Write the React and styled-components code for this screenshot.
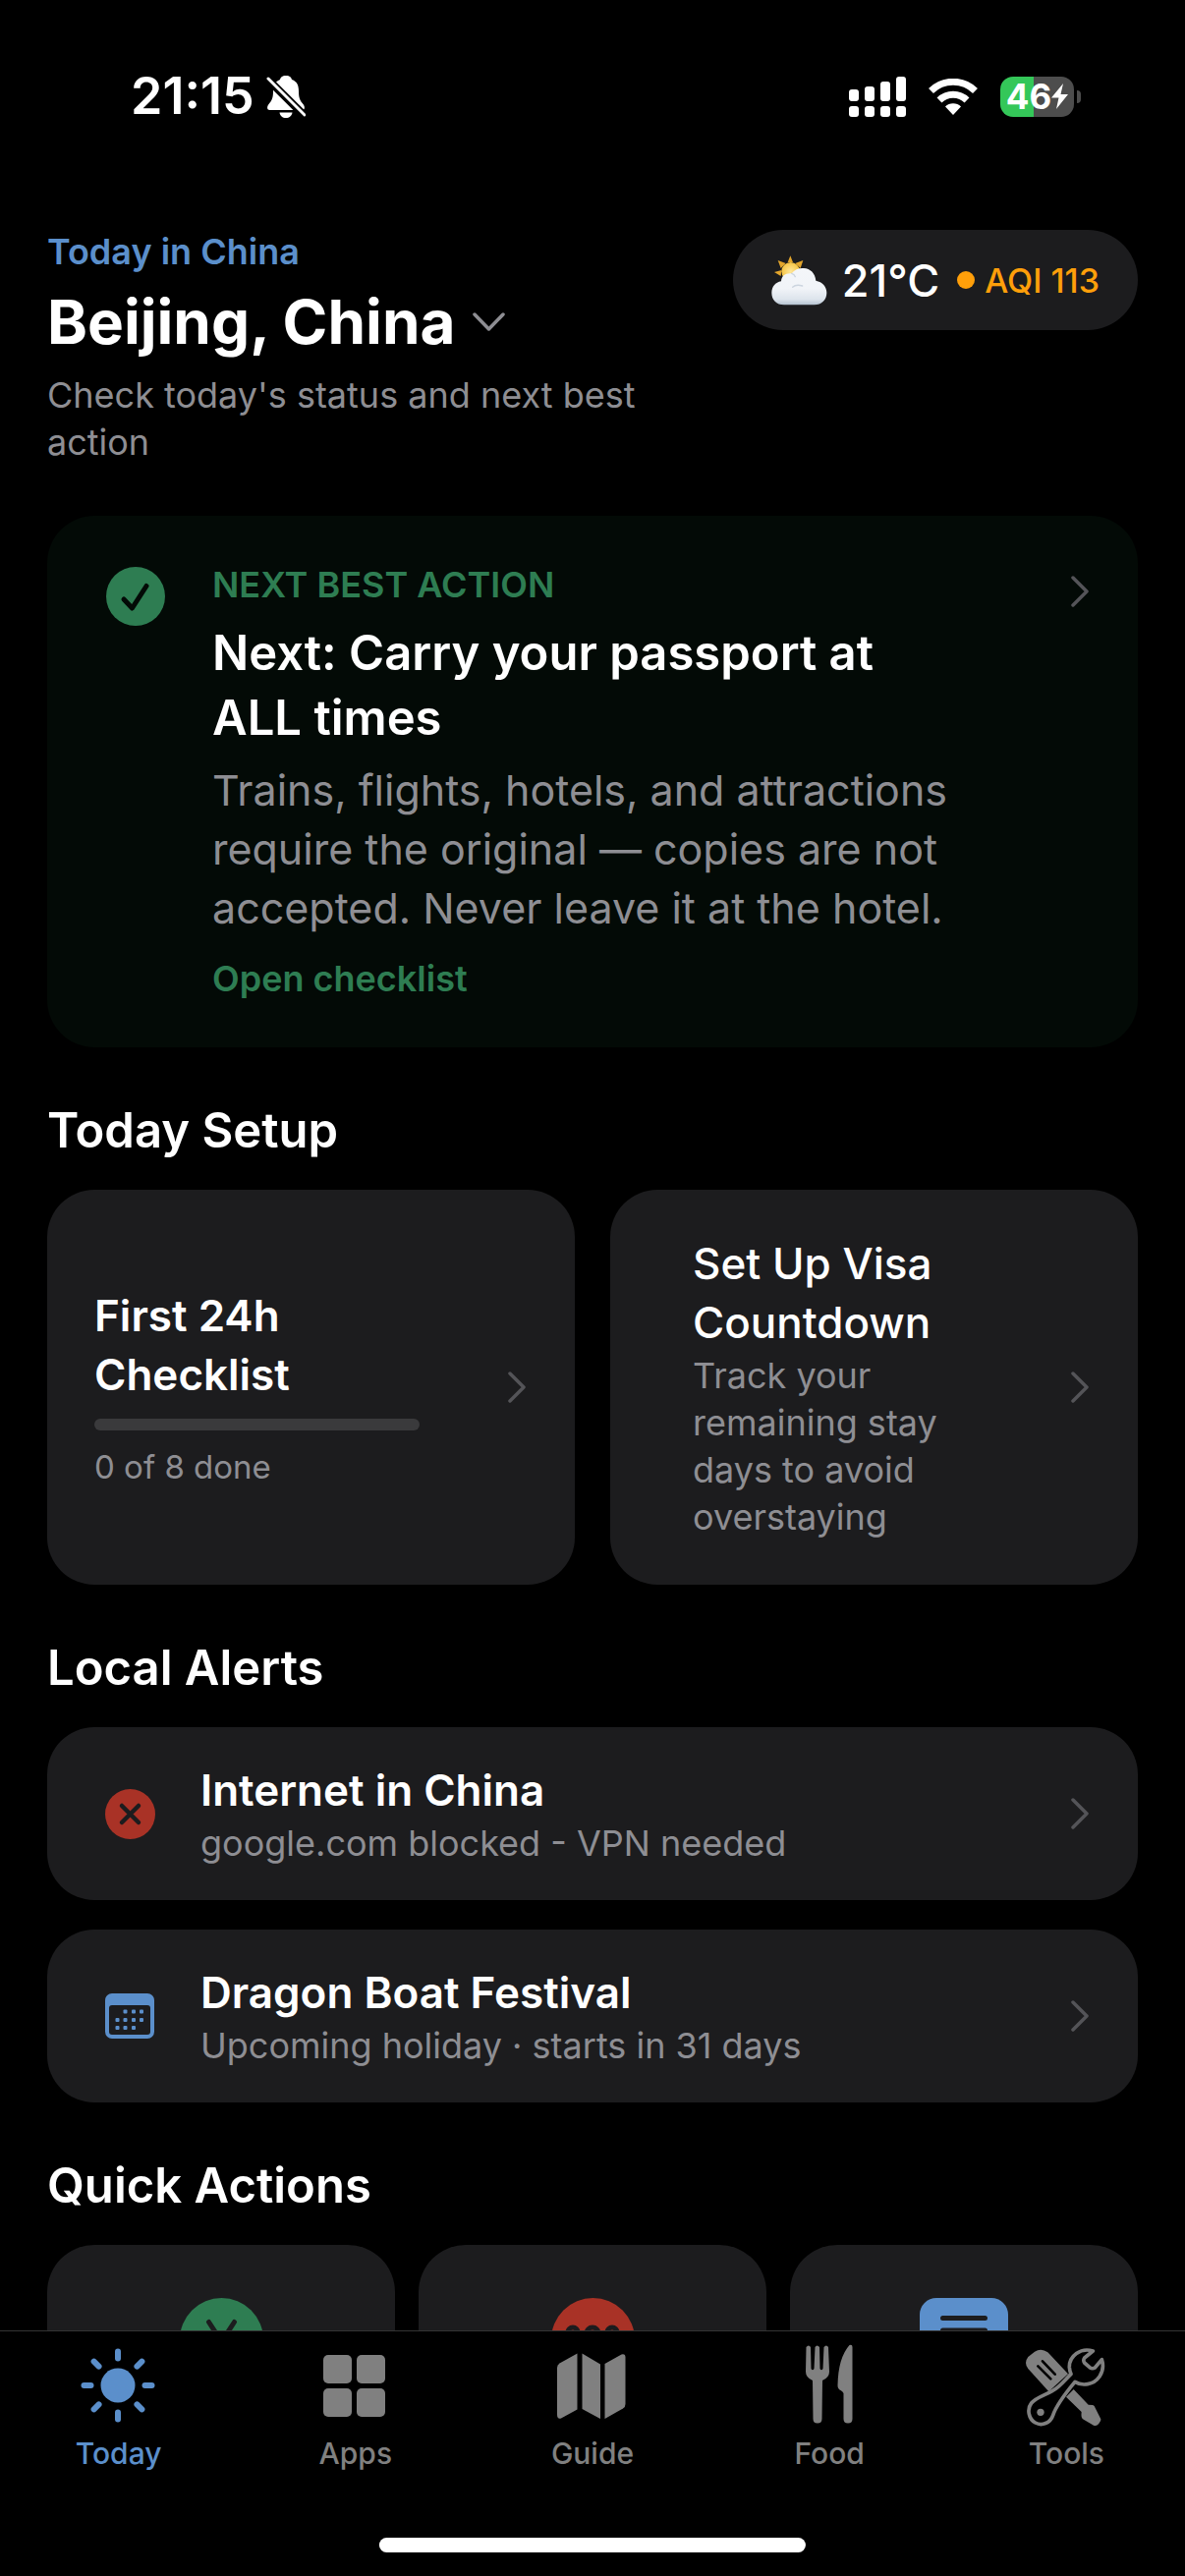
import styled, { createGlobalStyle } from "styled-components";

const GlobalStyle = createGlobalStyle`
  * {
    box-sizing: border-box;
    margin: 0;
    padding: 0;
  }
  body {
    background: #000;
    color: #fff;
    font-family: Inter, "Liberation Sans", sans-serif;
  }
  button {
    border: none;
    background: none;
    color: inherit;
    font: inherit;
    text-align: left;
    cursor: pointer;
  }
  a {
    color: inherit;
    text-decoration: none;
  }
  svg {
    display: block;
    flex-shrink: 0;
  }
`;

const Screen = styled.div`
  height: 100vh;
  display: flex;
  flex-direction: column;
  overflow: hidden;
`;

const StatusBar = styled.div`
  display: flex;
  align-items: center;
  justify-content: space-between;
  flex-shrink: 0;
  height: 196px;
  padding: 0 113px 0 133px;
`;

const StatusGroup = styled.div`
  display: flex;
  align-items: center;
  gap: ${(props) => props.$gap}px;
`;

const Clock = styled.span`
  font-size: 52px;
  line-height: 60px;
  font-weight: 600;
`;

const Battery = styled.div`
  position: relative;
  display: flex;
  align-items: center;
  justify-content: center;
  width: 75px;
  height: 41px;
  border-radius: 13px;
  background: linear-gradient(90deg, #34c759 46%, #4d4d4d 46%);
  font-size: 35px;
  font-weight: 700;
  line-height: 41px;

  &::after {
    content: "";
    position: absolute;
    right: -7px;
    top: 14px;
    width: 4px;
    height: 13px;
    border-radius: 0 4px 4px 0;
    background: #4d4d4d;
  }
`;

const Content = styled.main`
  flex: 1;
  min-height: 0;
  overflow: hidden;
  padding: 38px 48px 0;
`;

const Header = styled.header`
  display: flex;
  align-items: flex-start;
  justify-content: space-between;
  gap: 36px;
  margin-bottom: 51px;
`;

const HeaderText = styled.div`
  flex: 1;
`;

const Eyebrow = styled.p`
  font-size: 36px;
  line-height: 44px;
  font-weight: 600;
  color: ${(props) => props.$color};
`;

const CityButton = styled.button`
  display: flex;
  align-items: center;
  gap: 18px;
`;

const City = styled.h1`
  font-size: 62px;
  line-height: 100px;
  font-weight: 700;
`;

const Caption = styled.p`
  font-size: 36px;
  line-height: 48px;
  color: #8e8e93;
`;

const WeatherPill = styled.button`
  display: flex;
  align-items: center;
  height: 102px;
  padding: 0 39px;
  border-radius: 51px;
  background: #1c1c1e;
`;

const Temperature = styled.span`
  margin: 0 18px 0 15px;
  font-size: 45px;
  font-weight: 500;
`;

const Aqi = styled.span`
  display: flex;
  align-items: center;
  gap: 10px;
  font-size: 34px;
  font-weight: 500;
  color: #ff9f0a;

  &::before {
    content: "";
    width: 18px;
    height: 18px;
    border-radius: 50%;
    background: #ff9f0a;
  }
`;

const Card = styled.button`
  display: flex;
  align-items: center;
  width: 100%;
  padding: 45px 48px;
  border-radius: 48px;
  background: #1c1c1e;
`;

const ActionCard = styled(Card)`
  align-items: flex-start;
  padding: 48px 48px 48px 60px;
  background: #030a06;

  > svg {
    margin-top: 4px;
  }

  > svg:last-child {
    margin-top: 12px;
  }
`;

const ActionText = styled.div`
  flex: 1;
  padding: 0 110px 0 48px;
`;

const ActionTitle = styled.h2`
  margin: 15px 0 10px;
  font-size: 49px;
  line-height: 66px;
  font-weight: 600;
`;

const ActionBody = styled.p`
  margin-bottom: 20px;
  font-size: 43px;
  line-height: 60px;
  color: #8e8e93;
`;

const SectionTitle = styled.h2`
  margin: 54px 0 29px;
  font-size: 49px;
  line-height: 62px;
  font-weight: 600;
`;

const CardGrid = styled.div`
  display: grid;
  grid-template-columns: repeat(${(props) => props.$columns}, 1fr);
  gap: ${(props) => props.$gap}px;
`;

const CardText = styled.div`
  flex: 1;
  padding: 0 ${(props) => props.$right || 0}px 0 ${(props) => props.$left || 0}px;
`;

const CardTitle = styled.h3`
  font-size: 44px;
  line-height: 60px;
  font-weight: ${(props) => props.$weight || 600};
`;

const Progress = styled.div`
  height: 12px;
  margin: 15px 0;
  border-radius: 6px;
  background: #3a3a3c;
  overflow: hidden;
`;

const ProgressFill = styled.div`
  height: 100%;
  background: #2e7d52;
`;

const Done = styled.p`
  font-size: 33px;
  line-height: 45px;
  color: #8e8e93;
`;

const AlertList = styled.div`
  display: flex;
  flex-direction: column;
  gap: 30px;
`;

const AlertCard = styled(Card)`
  padding: 34px 48px;
`;

const AlertIcon = styled.div`
  display: flex;
  justify-content: center;
  width: 72px;
  margin-right: 36px;
`;

const QuickCard = styled.button`
  display: flex;
  justify-content: center;
  height: 280px;
  padding-top: 54px;
  border-radius: 48px;
  background: #1c1c1e;
`;

const TabBar = styled.nav`
  position: relative;
  display: grid;
  grid-template-columns: repeat(5, 1fr);
  flex-shrink: 0;
  height: 250px;
  border-top: 1px solid #343434;
  background: #000;
`;

const Tab = styled.a`
  display: flex;
  flex-direction: column;
  align-items: center;
  gap: 6px;
  padding-top: 13px;
  font-size: 30px;
  line-height: 42px;
  font-weight: 500;

  && {
    color: ${(props) => (props.$active ? "#5b8fcb" : "#808080")};
  }
`;

const HomeIndicator = styled.div`
  position: absolute;
  left: 50%;
  bottom: 24px;
  width: 36%;
  height: 15px;
  border-radius: 8px;
  background: #fff;
  transform: translateX(-50%);
`;

const BellOff = () => (
  <svg width="40" height="44" viewBox="0 0 40 44">
    <path
      fill="#fff"
      d="M20 1c-4 0-5.500 2-6 4C8.500 7 7 12 7 17c0 6-1 9-4.500 13C.5 32.500.5 36 3.500 36h33c3 0 3-3.500 1-6C34 26 33 23 33 17S31.500 7 26 5c-.5-2-2-4-6-4zM13.500 38.500h13c-.5 3.500-3 5.500-6.500 5.500s-6-2-6.500-5.500z"
    />
    <path stroke="#000" strokeWidth="8" d="M0 3l40 40" />
    <path stroke="#fff" strokeWidth="3" strokeLinecap="round" d="M2 4l37 37" />
  </svg>
);

const Signal = () => (
  <svg width="58" height="41" viewBox="0 0 58 41" fill="#fff">
    <rect x="0" y="13" width="10" height="12" rx="3" />
    <rect x="16" y="10" width="10" height="15" rx="3" />
    <rect x="32" y="5" width="10" height="20" rx="3" />
    <rect x="48" y="0" width="10" height="25" rx="3" />
    {[0, 16, 32, 48].map((x) => (
      <rect key={x} x={x} y="30" width="10" height="11" rx="3" />
    ))}
  </svg>
);

const Wifi = () => (
  <svg width="50" height="37" viewBox="0 0 50 37" fill="none">
    <path stroke="#fff" strokeWidth="7" d="M2.500 12.500a32 32 0 0 1 45 0" />
    <path stroke="#fff" strokeWidth="7" d="M11 22a20 20 0 0 1 28 0" />
    <path fill="#fff" d="M25 37l-8-8.500a11.500 11.500 0 0 1 16 0z" />
  </svg>
);

const Bolt = () => (
  <svg width="17" height="26" viewBox="0 0 17 26" fill="#fff">
    <path d="M12 0L0 14.500h7.500L5 26l12-15H9.500z" />
  </svg>
);

const Chevron = ({ down }) =>
  down ? (
    <svg width="33" height="20" viewBox="0 0 33 20" fill="none">
      <path
        d="M2 2l14.500 15L31 2"
        stroke="#8e8e93"
        strokeWidth="3.500"
        strokeLinecap="round"
        strokeLinejoin="round"
      />
    </svg>
  ) : (
    <svg width="20" height="34" viewBox="0 0 20 34" fill="none">
      <path
        d="M2 3l14 14L2 31"
        stroke="#545458"
        strokeWidth="3.500"
        strokeLinecap="round"
        strokeLinejoin="round"
      />
    </svg>
  );

const Weather = () => (
  <svg width="57" height="51" viewBox="39 61 171 153">
    <defs>
      <linearGradient id="cloud" x1="0" y1="0" x2="0" y2="1">
        <stop offset="0" stopColor="#f4f6f9" />
        <stop offset=".55" stopColor="#f1f4f8" />
        <stop offset=".85" stopColor="#dde4ec" />
        <stop offset="1" stopColor="#b4c2d0" />
      </linearGradient>
      <radialGradient id="sun">
        <stop offset="0" stopColor="#ffe79a" />
        <stop offset="1" stopColor="#f6c443" />
      </radialGradient>
    </defs>
    <path
      fill="#e3a52c"
      d="M89 82l8-20 8 20zM112 85l24-9-8 24zM68 100l-9-24 24 9zM70 106l-22 6 20 12z"
    />
    <circle cx="98" cy="110" r="28" fill="url(#sun)" />
    <path
      fill="url(#cloud)"
      d="M78 212c-24 0-38-16-38-37 0-18 11-32 29-35 1-17 13-26 32-24 9-12 22-17 37-16 20 1 35 15 37 38 20 4 33 18 33 37 0 21-15 37-38 37z"
    />
    <path
      d="M101 116q8 2 11 10M104 158q10-10 30-4"
      fill="none"
      stroke="#ccd5df"
      strokeWidth="4"
      strokeLinecap="round"
    />
  </svg>
);

const CheckCircle = () => (
  <svg width="60" height="60" viewBox="0 0 60 60">
    <circle cx="30" cy="30" r="30" fill="#2e7d52" />
    <path
      d="M18 33l8.500 9L41 19.500"
      fill="none"
      stroke="#030a06"
      strokeWidth="5"
      strokeLinecap="round"
      strokeLinejoin="round"
    />
  </svg>
);

const CrossCircle = () => (
  <svg width="51" height="51" viewBox="0 0 51 51">
    <circle cx="25.500" cy="25.500" r="25.500" fill="#a93226" />
    <path
      d="M17 17l17 17M34 17L17 34"
      stroke="#1c1c1e"
      strokeWidth="4.500"
      strokeLinecap="round"
    />
  </svg>
);

const calendarDots = [
  [20.500, 18.500],
  [29, 18.500],
  [37, 18.500],
  [12.500, 27],
  [20.500, 27],
  [29, 27],
  [37, 27],
  [12.500, 35],
  [20.500, 35],
  [29, 35],
];

const Calendar = () => (
  <svg width="50" height="46" viewBox="0 0 50 46">
    <path
      fill="#5b8fcb"
      fillRule="evenodd"
      d="M7 0h36a7 7 0 0 1 7 7v32a7 7 0 0 1-7 7H7a7 7 0 0 1-7-7V7a7 7 0 0 1 7-7zM7 12a3 3 0 0 0-3 3v24a3 3 0 0 0 3 3h36a3 3 0 0 0 3-3V15a3 3 0 0 0-3-3z"
    />
    {calendarDots.map(([x, y]) => (
      <rect key={`${x}-${y}`} x={x - 2} y={y - 2} width="4" height="4" rx="1" fill="#5b8fcb" />
    ))}
  </svg>
);

const YuanCircle = () => (
  <svg width="85" height="85" viewBox="0 0 85 85">
    <circle cx="42.500" cy="42.500" r="42.500" fill="#2e7d52" />
    <path
      d="M29.500 24.500l13 20 13-20M42.500 44.500V64M31 46h23M31 55h23"
      fill="none"
      stroke="#1c1c1e"
      strokeWidth="5"
      strokeLinecap="round"
    />
  </svg>
);

const SosCircle = () => (
  <svg width="85" height="85" viewBox="0 0 85 85">
    <circle cx="42.500" cy="42.500" r="42.500" fill="#a93226" />
    <g fill="none" stroke="#1c1c1e" strokeWidth="5">
      <rect x="17" y="30" width="10" height="24" rx="5" />
      <rect x="36" y="30" width="12" height="24" rx="6" />
      <rect x="57" y="30" width="10" height="24" rx="5" />
    </g>
  </svg>
);

const Phrase = () => (
  <svg width="90" height="85" viewBox="0 0 90 85">
    <rect width="90" height="85" rx="17" fill="#5b8fcb" />
    <path
      d="M23.500 20.500h43M23.500 33h43"
      stroke="#1c1c1e"
      strokeWidth="5"
      strokeLinecap="round"
    />
  </svg>
);

const SunIcon = () => (
  <svg width="84" height="84" viewBox="0 0 84 84">
    <circle cx="41" cy="42" r="17.500" fill="currentColor" />
    {[0, 45, 90, 135, 180, 225, 270, 315].map((angle) => (
      <path
        key={angle}
        d="M41 7.500v7"
        stroke="currentColor"
        strokeWidth="6"
        strokeLinecap="round"
        transform={`rotate(${angle} 41 42)`}
      />
    ))}
  </svg>
);

const GridIcon = () => (
  <svg width="84" height="84" viewBox="0 0 84 84" fill="currentColor">
    <rect x="9" y="11" width="29" height="29" rx="5" />
    <rect x="43" y="11" width="29" height="29" rx="5" />
    <rect x="9" y="45" width="29" height="29" rx="5" />
    <rect x="43" y="45" width="29" height="29" rx="5" />
  </svg>
);

const MapIcon = () => (
  <svg width="84" height="84" viewBox="0 0 84 84" fill="currentColor">
    <path d="M26.500 9.500v57L10 75.500q-4 1-4-3.500V24q0-3 2.500-4.500z" />
    <path d="M31.500 9.500l18.500 11V76L31.500 66z" />
    <path d="M54.500 20l17-9.500q4-1 4 3V61q0 3-2.500 4.500L54.500 76z" />
  </svg>
);

const CutleryIcon = () => (
  <svg width="84" height="84" viewBox="0 0 84 84" fill="currentColor">
    <path d="M18.500 3q2.500-3 4.500 0l.5 22q1.500 2.500 3 0L27.500 3q2-3 4.500 0l.5 22q1.500 2.500 3 0L36.500 3q2.500-3 4.500 0l1 25q0 6-7 9l-.5 39q0 4.500-4.500 4.500t-4.500-4.500L25 37q-7-3-7-9z" />
    <path d="M62.500 1q3-1 3 2v73q0 4.500-4.500 4.500T56.500 76V50q-1-2-3-3-3-1.500-3-5 .5-28 12-41z" />
  </svg>
);

const ToolsIcon = () => (
  <svg width="84" height="84" viewBox="40 33 252 252">
    <path
      fill="currentColor"
      d="M50 72l20-16q20-13 40 2l62 66-59 54-63-70q-14-18 0-36z"
    />
    <path
      d="M80 100l39 39M94 85l38 40"
      stroke="#000"
      strokeWidth="8"
      strokeLinecap="round"
    />
    <path
      fill="currentColor"
      d="M189 171l45 47 13 1q4 1 5 3l20 40q1 6-10 18-6 4-12 1l-33-19q-6-4-4-22l-47-46z"
    />
    <path
      d="M248 54C210 42 175 70 176 104q1 12 5 20c-21 21-36 41-56 51-25 15-50 20-65 38-15 19-8 49 12 60 20 11 46 1 54-23 8-25 24-50 67-102 22 14 57 10 75-16q16-24 7-52l-21 25q-8 5-16-1l-16-14q-5-8 0-15z"
      fill="#000"
      stroke="currentColor"
      strokeWidth="11"
      strokeLinejoin="round"
    />
    <circle cx="88" cy="241" r="11" fill="currentColor" />
  </svg>
);

const alerts = [
  {
    title: "Internet in China",
    detail: "google.com blocked - VPN needed",
    icon: <CrossCircle />,
  },
  {
    title: "Dragon Boat Festival",
    detail: "Upcoming holiday · starts in 31 days",
    icon: <Calendar />,
  },
];

const quickActions = [
  { label: "Payments", icon: <YuanCircle /> },
  { label: "Emergency", icon: <SosCircle /> },
  { label: "Phrases", icon: <Phrase /> },
];

const tabs = [
  { label: "Today", icon: <SunIcon /> },
  { label: "Apps", icon: <GridIcon /> },
  { label: "Guide", icon: <MapIcon /> },
  { label: "Food", icon: <CutleryIcon /> },
  { label: "Tools", icon: <ToolsIcon /> },
];

const App = () => {
  const done = 0;
  const total = 8;

  return (
    <Screen>
      <GlobalStyle />
      <StatusBar>
        <StatusGroup $gap={12}>
          <Clock>21:15</Clock>
          <BellOff />
        </StatusGroup>
        <StatusGroup $gap={23}>
          <Signal />
          <Wifi />
          <Battery>
            46
            <Bolt />
          </Battery>
        </StatusGroup>
      </StatusBar>

      <Content>
        <Header>
          <HeaderText>
            <Eyebrow $color="#5b8fcb">Today in China</Eyebrow>
            <CityButton>
              <City>Beijing, China</City>
              <Chevron down />
            </CityButton>
            <Caption>Check today's status and next best action</Caption>
          </HeaderText>
          <WeatherPill>
            <Weather />
            <Temperature>21°C</Temperature>
            <Aqi>AQI 113</Aqi>
          </WeatherPill>
        </Header>

        <ActionCard>
          <CheckCircle />
          <ActionText>
            <Eyebrow $color="#2e7d52">NEXT BEST ACTION</Eyebrow>
            <ActionTitle>Next: Carry your passport at ALL times</ActionTitle>
            <ActionBody>
              Trains, flights, hotels, and attractions require the original —
              copies are not accepted. Never leave it at the hotel.
            </ActionBody>
            <Eyebrow $color="#2e7d52">Open checklist</Eyebrow>
          </ActionText>
          <Chevron />
        </ActionCard>

        <SectionTitle>Today Setup</SectionTitle>
        <CardGrid $columns={2} $gap={36}>
          <Card>
            <CardText $right={90}>
              <CardTitle>First 24h Checklist</CardTitle>
              <Progress>
                <ProgressFill style={{ width: `${(done / total) * 100}%` }} />
              </Progress>
              <Done>
                {done} of {total} done
              </Done>
            </CardText>
            <Chevron />
          </Card>
          <Card>
            <CardText $left={36} $right={120}>
              <CardTitle $weight={500}>Set Up Visa Countdown</CardTitle>
              <Caption>Track your remaining stay days to avoid overstaying</Caption>
            </CardText>
            <Chevron />
          </Card>
        </CardGrid>

        <SectionTitle>Local Alerts</SectionTitle>
        <AlertList>
          {alerts.map((alert) => (
            <AlertCard key={alert.title}>
              <AlertIcon>{alert.icon}</AlertIcon>
              <CardText>
                <CardTitle>{alert.title}</CardTitle>
                <Caption>{alert.detail}</Caption>
              </CardText>
              <Chevron />
            </AlertCard>
          ))}
        </AlertList>

        <SectionTitle>Quick Actions</SectionTitle>
        <CardGrid $columns={3} $gap={24}>
          {quickActions.map((action) => (
            <QuickCard key={action.label} aria-label={action.label}>
              {action.icon}
            </QuickCard>
          ))}
        </CardGrid>
      </Content>

      <TabBar>
        {tabs.map((tab, index) => (
          <Tab key={tab.label} href={`#${tab.label.toLowerCase()}`} $active={index === 0}>
            {tab.icon}
            {tab.label}
          </Tab>
        ))}
        <HomeIndicator />
      </TabBar>
    </Screen>
  );
};

export default App;
